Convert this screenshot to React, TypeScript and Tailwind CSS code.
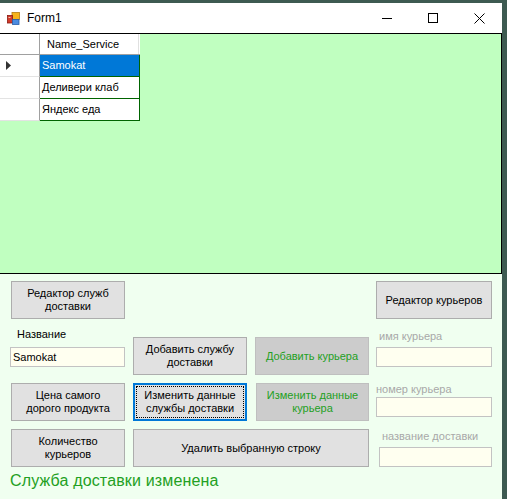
import React from 'react';

const font = "font-['Liberation_Sans',Arial,sans-serif]";

const Btn: React.FC<{ label: React.ReactNode; className?: string; disabled?: boolean; focused?: boolean }> = ({ label, className = '', disabled, focused }) => {
    if (focused) {
        return (
            <div className={`border-2 border-[#0078d7] bg-[#e1e1e1] p-[1px] ${className}`}>
                <div className="w-full h-full border border-dotted border-black flex items-center justify-center text-center leading-[13px] text-[11px] text-black">
                    {label}
                </div>
            </div>
        );
    }
    return (
        <div
            className={`border flex items-center justify-center text-center leading-[13px] text-[11px] ${
                disabled ? 'bg-[#cccccc] border-[#bfbfbf] text-[#23a023]' : 'bg-[#e1e1e1] border-[#adadad] text-black'
            } ${className}`}
        >
            {label}
        </div>
    );
};

const Field: React.FC<{ value?: string; className?: string }> = ({ value = '', className = '' }) => (
    <div className={`h-[20px] bg-[#fffff0] border border-[#c3c3c3] flex items-center px-[2px] text-[11px] text-black ${className}`}>
        {value}
    </div>
);

const FormIcon = () => (
    <svg width="13" height="13" viewBox="0 0 13 13">
        <rect x="5" y="0.5" width="7.5" height="7" fill="#f5b31b" stroke="#b57b0e" strokeWidth="0.8" />
        <rect x="0.5" y="3.5" width="5" height="7.5" fill="#d23a2a" stroke="#8a1a12" strokeWidth="0.8" />
        <rect x="5.5" y="7.5" width="6.5" height="5" fill="#4b8be0" stroke="#2a5ca8" strokeWidth="0.8" />
        <rect x="1.5" y="5" width="2" height="1" fill="#f0c0b0" />
    </svg>
);

const rows = ['Samokat', 'Деливери клаб', 'Яндекс еда'];

export default function App() {
    return (
        <div className={`w-[507px] h-[499px] bg-[#3d5a51] overflow-hidden ${font}`}>
            <div className="w-[502px] mt-[3px] h-[496px] flex flex-col bg-[#f0fff0]">
                {/* title bar */}
                <div className="h-[30px] bg-white flex items-center shrink-0">
                    <div className="ml-[7px] mt-[1px]"><FormIcon /></div>
                    <span className="ml-[7px] text-[12px] text-black">Form1</span>
                    <div className="ml-auto flex items-center h-full">
                        <div className="w-[46px] flex justify-center">
                            <div className="w-[10px] h-px bg-black" />
                        </div>
                        <div className="w-[46px] flex justify-center">
                            <div className="w-[10px] h-[10px] border border-black" />
                        </div>
                        <div className="w-[46px] flex justify-center">
                            <svg width="11" height="11" viewBox="0 0 11 11">
                                <path d="M0.5 0.5L10.5 10.5M10.5 0.5L0.5 10.5" stroke="#000" strokeWidth="1" />
                            </svg>
                        </div>
                    </div>
                </div>

                {/* data grid */}
                <div className="h-[241px] shrink-0 bg-[#c0ffc0] border-t border-b border-r border-black">
                    <div className="flex h-[21px] bg-white w-[140px] border-b border-[#a0a0a0]">
                        <div className="w-[40px] border-r border-[#a0a0a0]" />
                        <div className="w-[99px] text-[11px] pl-[7px] flex items-center text-black border-r border-[#e0e0e0]">Name_Service</div>
                    </div>
                    {rows.map((r, i) => (
                        <div key={r} className="flex h-[22px] w-[140px]">
                            <div className="w-[40px] bg-white border-r border-[#a0a0a0] border-b border-b-[#e3e3e3] flex items-center">
                                {i === 0 && (
                                    <svg width="6" height="9" viewBox="0 0 6 9" className="ml-[6px]">
                                        <path d="M0 0L5 4.5L0 9Z" fill="#333" />
                                    </svg>
                                )}
                            </div>
                            <div
                                className={`w-[100px] flex items-center pl-[2px] text-[11px] border-r border-b border-[#006400] ${
                                    i === 0 ? 'bg-[#0078d7] text-white' : 'bg-white text-black'
                                }`}
                            >
                                {r}
                            </div>
                        </div>
                    ))}
                </div>

                {/* controls */}
                <div className="pl-[10px] pt-[7px] grid grid-cols-[115px_114px_114px_115px] gap-x-[8px] gap-y-[8px] grid-rows-[38px_48px_38px_38px]">
                    <Btn className="col-start-1 row-start-1 ml-px" label={<>Редактор служб<br />доставки</>} />
                    <Btn className="col-start-4 row-start-1 -ml-px" label="Редактор курьеров" />

                    <div className="col-start-1 row-start-2 flex flex-col">
                        <span className="ml-[7px] text-[11px] leading-[14px] text-black">Название</span>
                        <Field className="mt-[6px]" value="Samokat" />
                    </div>
                    <Btn className="col-start-2 row-start-2 self-end h-[38px]" label={<>Добавить службу<br />доставки</>} />
                    <Btn className="col-start-3 row-start-2 self-end h-[38px]" disabled label="Добавить курьера" />
                    <div className="col-start-4 row-start-2 flex flex-col">
                        <span className="ml-[2px] mt-[2px] text-[11px] leading-[14px] text-[#a8a8a8]">имя курьера</span>
                        <Field className="mt-[4px] -ml-px" />
                    </div>

                    <Btn className="col-start-1 row-start-3 ml-px" label={<>Цена самого<br />дорого продукта</>} />
                    <Btn className="col-start-2 row-start-3" focused label={<>Изменить данные<br />службы доставки</>} />
                    <Btn className="col-start-3 row-start-3 ml-px" disabled label={<>Изменить данные<br />курьера</>} />
                    <div className="col-start-4 row-start-3 flex flex-col">
                        <span className="-ml-px -mt-[1px] text-[11px] leading-[14px] text-[#a8a8a8]">номер курьера</span>
                        <Field className="mt-px -ml-px" />
                    </div>

                    <Btn className="col-start-1 row-start-4 ml-px" label={<>Количество<br />курьеров</>} />
                    <Btn className="col-start-2 col-span-2 row-start-4" label="Удалить выбранную строку" />
                    <div className="col-start-4 row-start-4 flex flex-col">
                        <span className="ml-[5px] text-[11px] leading-[14px] text-[#a8a8a8]">название доставки</span>
                        <Field className="mt-[4px] ml-[2px]" />
                    </div>
                </div>
                <div className="pl-[10px] mt-[4px] text-[16px] leading-[20px] tracking-[0.15px] text-[#23a023]">Служба доставки изменена</div>
            </div>
        </div>
    );
}
